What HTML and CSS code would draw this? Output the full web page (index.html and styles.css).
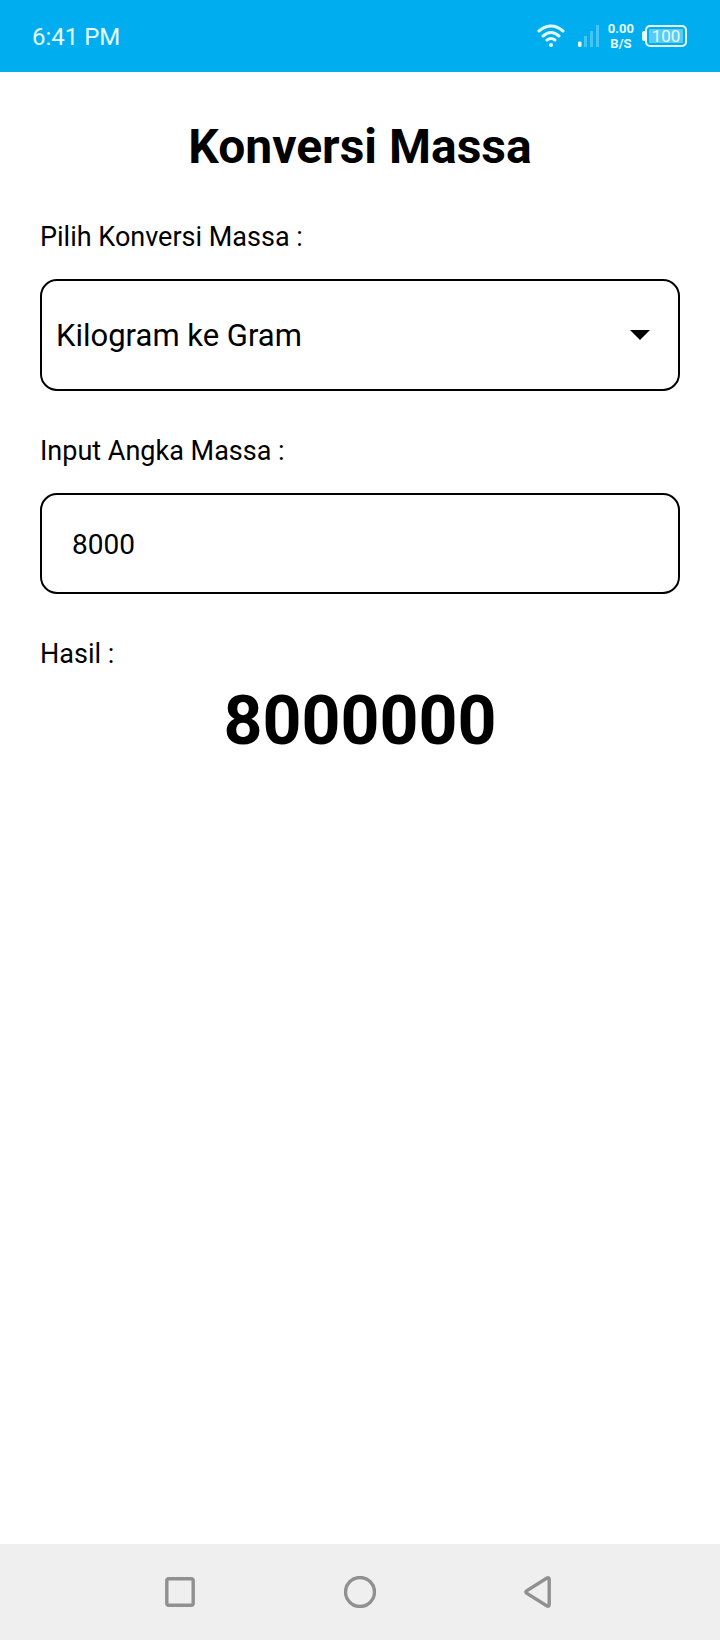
FILE: index.html
```html
<!DOCTYPE html>
<html lang="id">
<head>
<meta charset="utf-8">
<meta name="viewport" content="width=device-width, initial-scale=1">
<title>Konversi Massa</title>
<link rel="stylesheet" href="styles.css">
</head>
<body>
<div class="screen">
  <header class="status-bar">
    <time class="clock">6:41 PM</time>
    <div class="indicators">
      <svg class="wifi" width="28" height="24" viewBox="0 0 28 24" fill="none" stroke="currentColor" stroke-width="3" stroke-linecap="round" aria-label="Wi-Fi">
        <path d="M2 7Q14-3 26 7M6 12Q14 5 22 12M10 16Q14 13 18 16"/>
        <circle cx="14" cy="21" r="2" fill="currentColor" stroke="none"/>
      </svg>
      <svg class="signal" width="22" height="22" viewBox="0 0 22 22" fill="currentColor" aria-label="Sinyal">
        <rect x="0" y="16.5" width="3.5" height="5.5" rx="1.2"/>
        <path opacity=".3" d="M6 11h3v11H6zM12 6h3v16h-3zM18 0h3v22h-3z"/>
      </svg>
      <div class="speed"><span>0.00</span><span>B/S</span></div>
      <div class="battery"><span class="battery-level">100</span></div>
    </div>
  </header>

  <main class="content">
    <h1 class="title">Konversi Massa</h1>
    <form class="form">
      <div class="field">
        <label class="label" for="conversion">Pilih Konversi Massa :</label>
        <div class="select-box">
          <select class="control select" id="conversion">
            <option>Kilogram ke Gram</option>
          </select>
          <svg class="arrow" width="20" height="10" viewBox="0 0 20 10" aria-hidden="true"><path d="M0 0h20L10 10z"/></svg>
        </div>
      </div>
      <div class="field">
        <label class="label" for="amount">Input Angka Massa :</label>
        <input class="control input" id="amount" type="text" inputmode="decimal" value="8000">
      </div>
      <div class="result">
        <label class="label" for="total">Hasil :</label>
        <output class="total" id="total" for="conversion amount">8000000</output>
      </div>
    </form>
  </main>

  <nav class="nav-bar">
    <button class="nav-button" type="button" aria-label="Aplikasi terbaru">
      <svg width="32" height="32" viewBox="0 0 32 32"><rect x="2.8" y="2.8" width="26.4" height="26.4" rx="2"/></svg>
    </button>
    <button class="nav-button" type="button" aria-label="Beranda">
      <svg width="32" height="32" viewBox="0 0 32 32"><circle cx="16" cy="16" r="14.5"/></svg>
    </button>
    <button class="nav-button" type="button" aria-label="Kembali">
      <svg width="32" height="32" viewBox="0 0 32 32"><path d="M23 2 2.6 14.8Q1 16 2.6 17.2L23 30Q25.2 31 25.2 28.6V3.4Q25.2 1 23 2Z"/></svg>
    </button>
  </nav>
</div>
</body>
</html>
```
FILE: styles.css
```css
* {
  box-sizing: border-box;
}

body {
  margin: 0;
  background: #fff;
  color: #000;
  font-family: Roboto, "Liberation Sans", sans-serif;
}

.screen {
  display: flex;
  flex-direction: column;
  min-height: 100vh;
}

.status-bar {
  display: flex;
  align-items: center;
  justify-content: space-between;
  height: 72px;
  padding: 0 33px 0 32px;
  background: #00aef0;
  color: #e6fbff;
}

.clock {
  padding-top: 2px;
  font-size: 24px;
}

.indicators {
  display: flex;
  align-items: center;
  gap: 8px;
}

.signal {
  margin-left: 5px;
}

.speed {
  display: flex;
  flex-direction: column;
  align-items: center;
  font-size: 13px;
  font-weight: 700;
  line-height: 15px;
}

.battery {
  display: flex;
  align-items: center;
}

.battery::before {
  content: "";
  width: 3px;
  height: 10px;
  border-radius: 2px 0 0 2px;
  background: currentColor;
}

.battery-level {
  width: 42px;
  border: 2px solid currentColor;
  border-radius: 5px;
  background: #58cbf6;
  box-shadow: inset 0 0 0 2px #00aef0;
  font-size: 17px;
  line-height: 18px;
  text-align: center;
}

.content {
  flex: 1;
  padding: 45px 40px;
}

.title {
  margin: 0 0 41px;
  font-size: 48px;
  line-height: 60px;
  text-align: center;
}

.form {
  display: flex;
  flex-direction: column;
  gap: 41px;
}

.field {
  display: flex;
  flex-direction: column;
  gap: 23px;
}

.label {
  font-size: 27px;
  line-height: 38px;
}

.select-box {
  display: grid;
  align-items: center;
}

.control {
  width: 100%;
  border: 2px solid #000;
  border-radius: 17px;
  background: transparent;
  color: inherit;
  font-family: inherit;
}

.select {
  grid-area: 1 / 1;
  height: 112px;
  padding: 0 60px 0 14px;
  appearance: none;
  font-size: 31px;
}

.arrow {
  grid-area: 1 / 1;
  justify-self: end;
  margin-right: 30px;
  pointer-events: none;
}

.input {
  height: 101px;
  padding: 2px 30px 0;
  font-size: 28px;
}

.result {
  display: flex;
  flex-direction: column;
  gap: 8px;
}

.total {
  font-size: 68px;
  font-weight: 700;
  line-height: 80px;
  text-align: center;
}

.nav-bar {
  display: grid;
  grid-template-columns: repeat(3, 1fr);
  height: 96px;
  padding: 0 12.5%;
  background: #efefef;
}

.nav-button {
  display: grid;
  place-items: center;
  padding: 0;
  border: 0;
  background: none;
}

.nav-button svg {
  fill: none;
  stroke: #909090;
  stroke-width: 3.4;
}
```
